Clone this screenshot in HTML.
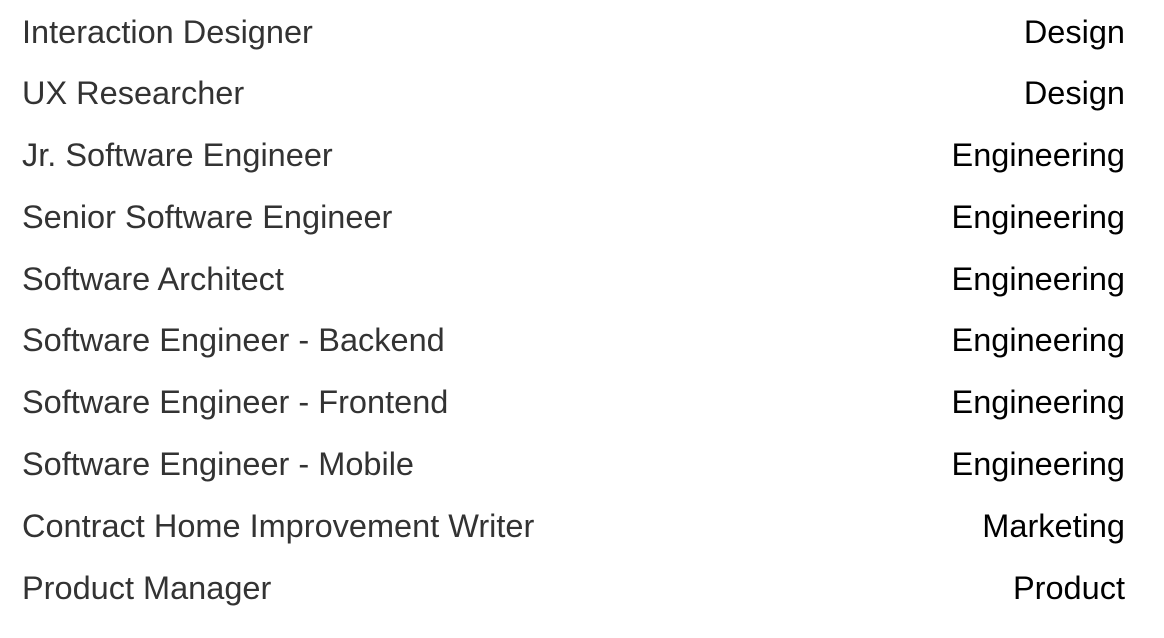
<!DOCTYPE html>
<html><head><meta charset="utf-8"><style>
html,body{margin:0;padding:0;background:#fff;width:1164px;height:638px;overflow:hidden}
.wrap{position:absolute;left:22px;top:1.5px;width:1103px}
.r{height:61.8px;line-height:61.8px;font-family:"Liberation Sans",Arial,sans-serif;font-size:32.5px;display:flex;justify-content:space-between;white-space:nowrap}
.l{color:#333}.d{color:#000}
</style></head><body><div class="wrap">
<div class="r"><span class="l">Interaction Designer</span><span class="d">Design</span></div>
<div class="r"><span class="l">UX Researcher</span><span class="d">Design</span></div>
<div class="r"><span class="l">Jr. Software Engineer</span><span class="d">Engineering</span></div>
<div class="r"><span class="l">Senior Software Engineer</span><span class="d">Engineering</span></div>
<div class="r"><span class="l">Software Architect</span><span class="d">Engineering</span></div>
<div class="r"><span class="l">Software Engineer - Backend</span><span class="d">Engineering</span></div>
<div class="r"><span class="l">Software Engineer - Frontend</span><span class="d">Engineering</span></div>
<div class="r"><span class="l">Software Engineer - Mobile</span><span class="d">Engineering</span></div>
<div class="r"><span class="l">Contract Home Improvement Writer</span><span class="d">Marketing</span></div>
<div class="r"><span class="l">Product Manager</span><span class="d">Product</span></div>
</div></body></html>
